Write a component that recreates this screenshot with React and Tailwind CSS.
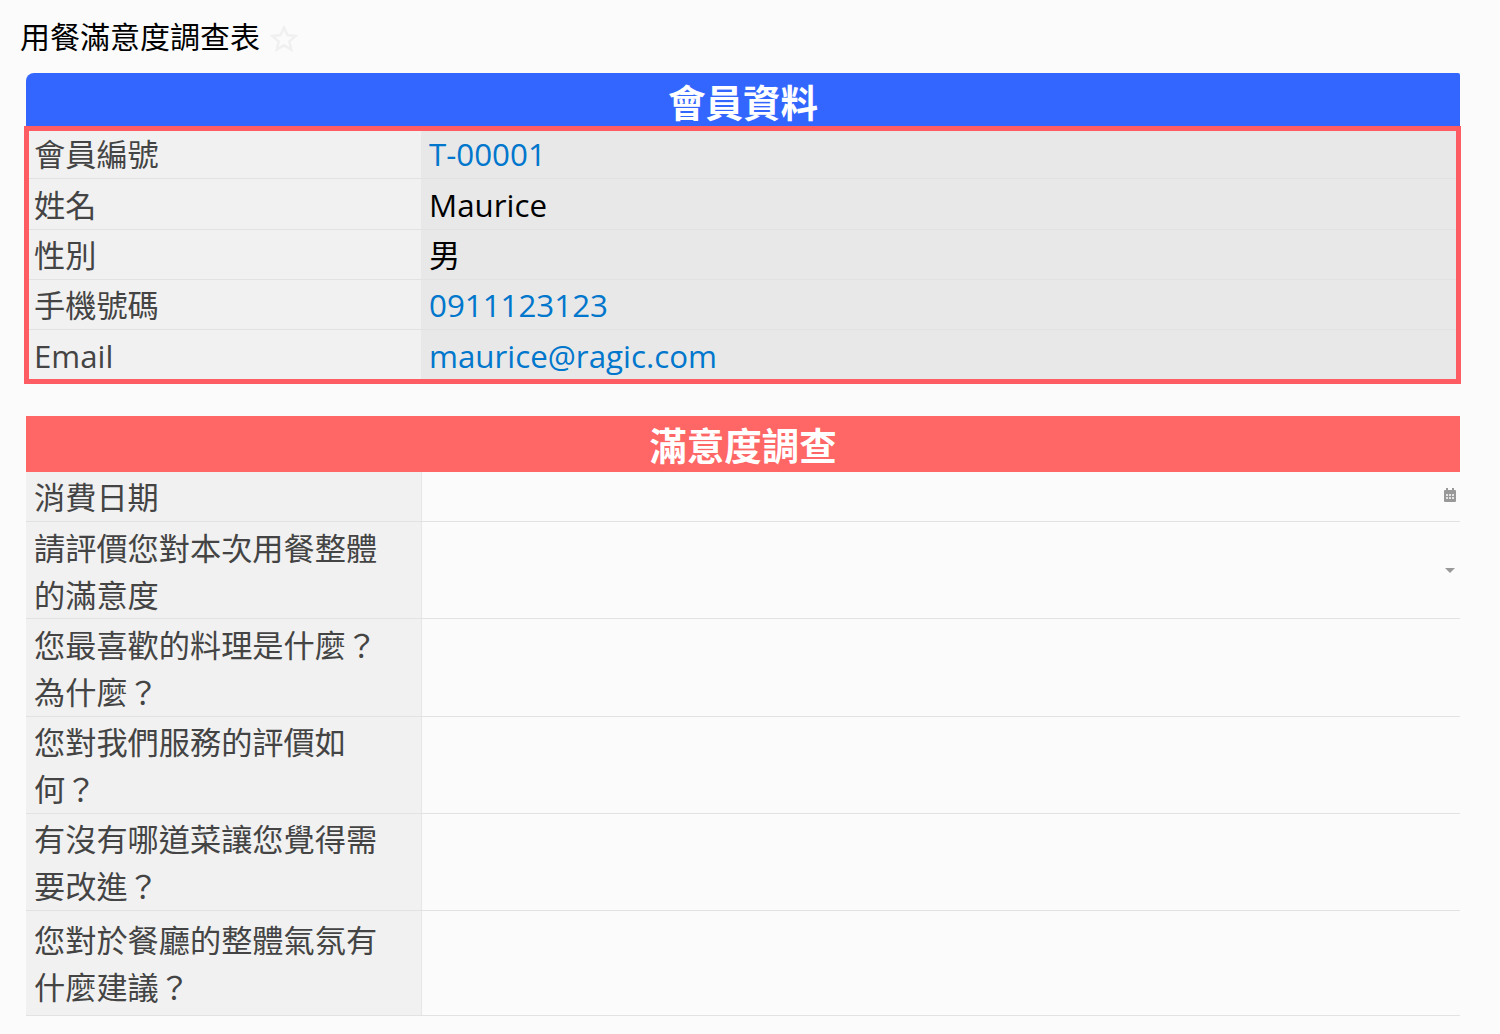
import React from "react";

const memberRows = [
    { label: "會員編號", value: "T-00001", link: true, h: "h-[48px]", labelLeading: "leading-[46px]", valueLeading: "leading-[46px]" },
    { label: "姓名", value: "Maurice", h: "h-[51px]", labelLeading: "leading-[52px]", valueLeading: "leading-[52px]" },
    { label: "性別", value: "男", h: "h-[50px]", labelLeading: "leading-[50px]", valueLeading: "leading-[50px]" },
    { label: "手機號碼", value: "0911123123", link: true, h: "h-[50px]", labelLeading: "leading-[50px]", valueLeading: "leading-[50px]" },
    { label: "Email", value: "maurice@ragic.com", link: true, h: "h-[49px]", labelLeading: "leading-[52px]", valueLeading: "leading-[52px]", last: true },
];

const surveyRows = [
    { lines: ["消費日期"], h: "h-[50px]", pad: "pt-[2px]", icon: "calendar" },
    { lines: ["請評價您對本次用餐整體", "的滿意度"], h: "h-[97px]", pad: "pt-[3px]", icon: "caret" },
    { lines: ["您最喜歡的料理是什麼？", "為什麼？"], h: "h-[98px]", pad: "pt-[3px]" },
    { lines: ["您對我們服務的評價如", "何？"], h: "h-[97px]", pad: "pt-[2px]" },
    { lines: ["有沒有哪道菜讓您覺得需", "要改進？"], h: "h-[97px]", pad: "pt-[2px]" },
    { lines: ["您對於餐廳的整體氣氛有", "什麼建議？"], h: "h-[105px]", pad: "pt-[6px]" },
];

const CalendarIcon = () => (
    <svg className="mb-[3px]" width="12" height="14" viewBox="0 0 12 14" fill="#999">
        <path d="M2 0h2v2h4V0h2v2h1a1 1 0 0 1 1 1v10a1 1 0 0 1-1 1H1a1 1 0 0 1-1-1V3a1 1 0 0 1 1-1h1z" />
        <path fill="#e4e4e4" d="M2 6h2v2H2zM5 6h2v2H5zM8 6h2v2H8zM2 9h2v2H2zM5 9h2v2H5zM8 9h2v2H8z" />
    </svg>
);

const CaretIcon = () => (
    <svg className="mr-[1px]" width="10" height="5" viewBox="0 0 10 5" fill="#999">
        <path d="M0 0h10L5 5z" />
    </svg>
);

const App = () => {
    return (
        <div className="min-h-[1034px] bg-[#fbfbfb] pl-[26px] pr-[40px] font-['Open_Sans','Noto_Sans_CJK_TC',sans-serif] text-[31.2px]">
            <div className="h-[73px] flex items-center -ml-[6px]">
                <h1 className="text-[30px] text-black font-normal leading-[73px]">用餐滿意度調查表</h1>
                <svg className="ml-[10px] mt-[3px]" width="28" height="27" viewBox="0 0 28 27" fill="none" stroke="#f0f0f0" strokeWidth="2.5">
                    <path d="M14 2.5l3.4 7.6 8.2.8-6.2 5.5 1.8 8.1-7.2-4.2-7.2 4.2 1.8-8.1-6.2-5.5 8.2-.8z" />
                </svg>
            </div>

            <div className="h-[53px] bg-[#3366ff] rounded-tl-[8px] rounded-tr-[2px] text-white font-bold text-center text-[37.5px] leading-[60px]">
                會員資料
            </div>
            <div className="-ml-[2px] -mr-[1px] border-[5px] border-[#ff5c63] bg-[#f1f1f1]">
                {memberRows.map((row) => (
                    <div key={row.label} className={`flex ${row.h} ${row.last ? "" : "border-b border-[#e2e2e2]"}`}>
                        <div className={`w-[392px] shrink-0 pl-[5px] text-[#444] ${row.labelLeading}`}>{row.label}</div>
                        <div className={`flex-1 bg-[#e8e8e8] pl-[8px] text-[31.3px] ${row.valueLeading} ${row.link ? "text-[#0077cc]" : "text-black"}`}>
                            {row.value}
                        </div>
                    </div>
                ))}
            </div>

            <div className="mt-[32px] h-[56px] bg-[#ff6666] text-white font-bold text-center text-[37.5px] leading-[60px]">
                滿意度調查
            </div>
            {surveyRows.map((row) => (
                <div key={row.lines[0]} className={`flex ${row.h} border-b border-[#e2e2e2]`}>
                    <div className={`w-[396px] shrink-0 bg-[#f1f1f1] border-r border-[#e6e6e6] pl-[8px] text-[#444] leading-[47px] ${row.pad}`}>
                        {row.lines.map((line) => (
                            <div key={line}>{line}</div>
                        ))}
                    </div>
                    <div className="flex-1 flex items-center justify-end pr-[4px]">
                        {row.icon === "calendar" && <CalendarIcon />}
                        {row.icon === "caret" && <CaretIcon />}
                    </div>
                </div>
            ))}
        </div>
    );
};

export default App;
